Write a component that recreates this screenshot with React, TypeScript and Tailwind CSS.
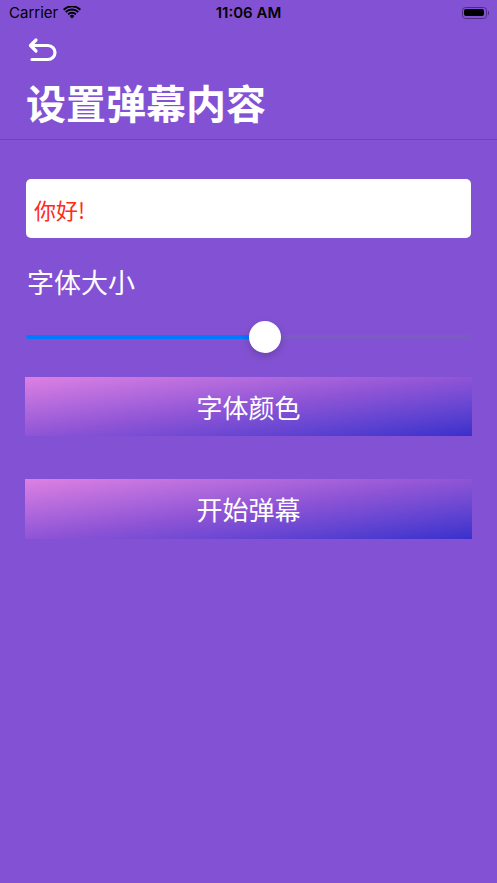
import React from "react";

export default function App() {
  const font = { fontFamily: '"Noto Sans CJK SC", "Noto Sans", sans-serif' };
  return (
    <div className="w-[497px] h-[883px] bg-[#8352d4] flex flex-col" style={font}>
      {/* status bar */}
      <div className="h-[25px] relative flex items-center px-[9px] text-black">
        <div className="flex items-center gap-[5px]">
          <span className="text-[15px] leading-none" style={{ fontFamily: '"Inter", "Liberation Sans", sans-serif' }}>Carrier</span>
          <svg width="18" height="13" viewBox="0 0 18 13">
            <path d="M9 12.5 L6.6 9.9 A3.5 3.5 0 0 1 11.4 9.9 Z" fill="#000" />
            <path d="M4.4 7.7 A6.6 6.6 0 0 1 13.6 7.7 L12.3 9.1 A4.7 4.7 0 0 0 5.7 9.1 Z" fill="#000" />
            <path d="M2.1 5.3 A9.9 9.9 0 0 1 15.9 5.3 L14.6 6.7 A8 8 0 0 0 3.4 6.7 Z" fill="#000" />
            <path d="M0 3 A13 13 0 0 1 18 3 L16.7 4.4 A11.1 11.1 0 0 0 1.3 4.4 Z" fill="#000" />
          </svg>
        </div>
        <span className="absolute left-0 right-0 text-center text-[15px] font-semibold leading-none" style={{ fontFamily: '"Inter", "Liberation Sans", sans-serif' }}>11:06 AM</span>
        <div className="ml-auto flex items-center mr-[-1px]">
          <div className="w-[25px] h-[12px] rounded-[3.5px] border border-[#4a2d80] p-[1.5px]">
            <div className="w-full h-full bg-black rounded-[2px]" />
          </div>
          <div className="w-[1.5px] h-[4px] bg-[#4a2d80] rounded-r-sm ml-[1px]" />
        </div>
      </div>

      {/* nav */}
      <div className="px-[27px] pt-[12px]">
        <svg width="32" height="26" viewBox="0 0 32 26" fill="none" stroke="#fff" strokeWidth="3.2" strokeLinecap="round" strokeLinejoin="round">
          <path d="M9 3 L3.5 8.5 L9 14" />
          <path d="M4 8.5 H21 A7 7 0 0 1 21 22.5 H5" />
        </svg>
      </div>
      <div className="px-[26px] pt-[15px] pb-[13px]">
        <h1 className="text-white text-[40px] font-bold leading-[48px] tracking-[0px]">设置弹幕内容</h1>
      </div>
      <div className="h-px bg-[#7240c2]" />

      <div className="px-[26px] pt-[39px] flex flex-col">
        <div className="h-[59px] bg-white rounded-[5px] flex items-center px-[8px]">
          <span className="text-[#ff2a1a] text-[22px] leading-none">你好!</span>
        </div>
        <div className="text-white text-[27px] leading-none mt-[30px] pl-[1px]">字体大小</div>
        <div className="relative h-[32px] mt-[26px] flex items-center">
          <div className="w-full h-[4px] rounded-full bg-[#7c5cc4] flex">
            <div className="h-full w-[239px] rounded-full bg-[#007aff]" />
          </div>
          <div className="absolute left-[223px] top-0 w-[32px] h-[32px] rounded-full bg-white shadow-[0_3px_8px_rgba(0,0,0,0.2)]" />
        </div>

        <button className="mt-[24px] h-[59px] -mx-px bg-linear-to-br from-[#de80e2] via-[#8f54d6] to-[#3a2fcc] text-white text-[26px] leading-none flex items-center justify-center">
          字体颜色
        </button>
        <button className="mt-[43px] h-[60px] -mx-px bg-linear-to-br from-[#de80e2] via-[#8f54d6] to-[#3a2fcc] text-white text-[26px] leading-none flex items-center justify-center">
          开始弹幕
        </button>
      </div>
    </div>
  );
}
